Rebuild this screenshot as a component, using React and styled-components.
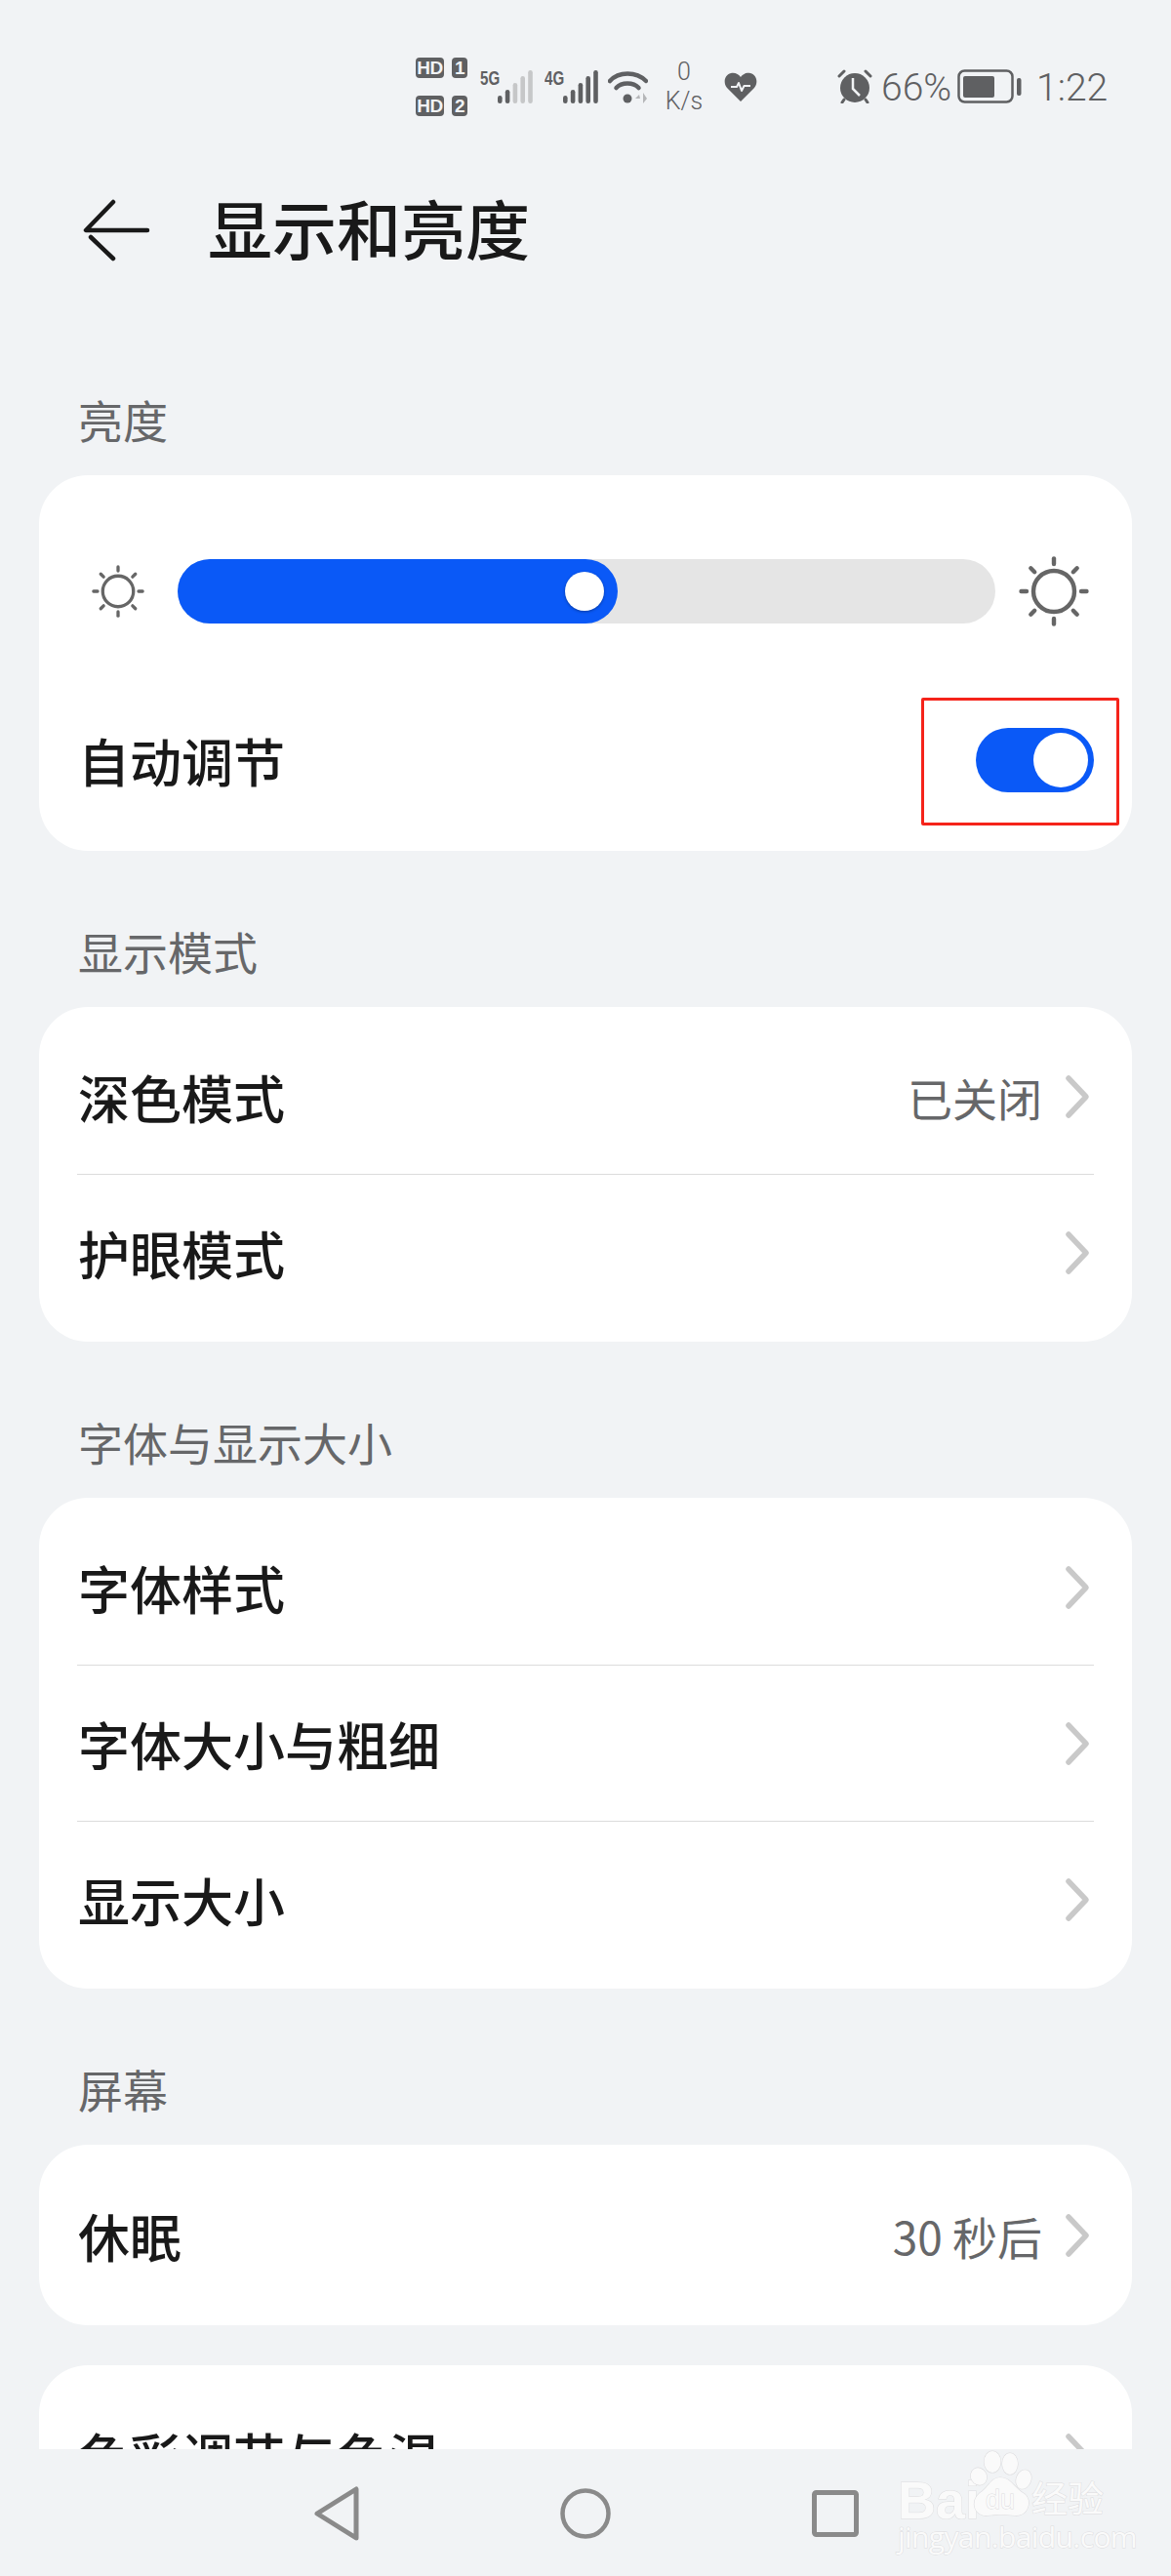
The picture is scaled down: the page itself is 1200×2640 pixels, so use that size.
import React from "react";
import styled, { createGlobalStyle } from "styled-components";

const FONT = `"Noto Sans CJK SC", "Noto Sans", sans-serif`;
const INK = "#5f6062";

const Global = createGlobalStyle`
  html, body { margin: 0; padding: 0; background: #f1f3f5; }
  * { box-sizing: border-box; }
`;

const Page = styled.div`
  width: 1200px;
  height: 2640px;
  display: flex;
  flex-direction: column;
  position: relative;
  overflow: hidden;
  background: #f1f3f5;
  font-family: ${FONT};
`;

const StatusBar = styled.div`
  height: 177px;
  flex: none;
  display: flex;
  align-items: center;
  padding-left: 426px;
  color: ${INK};
  font-family: Roboto, "Noto Sans", sans-serif;
`;
const SimColumn = styled.div`
  width: 53px;
  display: flex;
  flex-direction: column;
  gap: 18px;
`;
const SimRow = styled.div`
  display: flex;
  justify-content: space-between;
`;
const SimBadge = styled.span`
  height: 21px;
  width: ${(p) => p.$w}px;
  background: ${INK};
  color: #f1f3f5;
  border-radius: 4px;
  font: 700 19px/21px "Liberation Sans", sans-serif;
  text-align: center;
  letter-spacing: -0.5px;
`;
const NetLabel = styled.span`
  font: 700 21px/18px "Liberation Sans", sans-serif;
  transform: scaleX(0.72);
  transform-origin: left center;
  width: ${(p) => p.$w}px;
  margin-left: ${(p) => p.$ml}px;
  margin-bottom: 17px;
  white-space: nowrap;
`;
const StatusIcon = styled.svg`
  display: block;
  flex: none;
  margin-left: ${(p) => p.$ml || 0}px;
`;
const Speed = styled.div`
  width: 40px;
  margin-left: 17px;
  display: flex;
  flex-direction: column;
  align-items: center;
  font-weight: 300;
  font-size: 25px;
  line-height: 30px;
`;
const StatusText = styled.span`
  font-size: 39px;
  font-weight: 300;
  line-height: 40px;
  margin-left: ${(p) => p.$ml}px;
  margin-top: 3px;
`;

const Header = styled.header`
  height: 167px;
  flex: none;
  display: flex;
  align-items: flex-start;
  padding: 27px 0 0 85px;
`;
const Title = styled.h1`
  margin: -5px 0 0 58px;
  font-size: 66px;
  font-weight: 500;
  line-height: 66px;
  color: #191919;
`;

const Scroll = styled.main`
  flex: 1;
  min-height: 0;
  overflow: hidden;
  padding: 0 40px;
`;
const SectionLabel = styled.div`
  font-size: 46px;
  line-height: 56px;
  padding-left: 40px;
  height: ${(p) => (p.$first ? 143 : 160)}px;
  padding-top: ${(p) => (p.$first ? 57 : 74)}px;
  color: #666769;
`;
const Card = styled.section`
  background: #fff;
  border-radius: 50px;
  padding: ${(p) => (p.$flat ? 0 : 12)}px 0;
  margin-top: ${(p) => p.$mt || 0}px;
`;
const SliderRow = styled.div`
  display: flex;
  align-items: center;
  padding: 83px 44px 0 54px;
`;
const Track = styled.div`
  flex: 1;
  height: 66px;
  margin: 0 24px 0 34px;
  border-radius: 33px;
  background: #e5e5e5;
`;
const Fill = styled.div`
  height: 100%;
  border-radius: 33px;
  background: #0a59f7;
  display: flex;
  align-items: center;
  justify-content: flex-end;
  padding-right: 14px;
`;
const Thumb = styled.span`
  width: 40px;
  height: 40px;
  border-radius: 50%;
  background: #fff;
  box-shadow: 0 1px 3px rgba(0, 0, 0, 0.35);
`;
const AutoRow = styled.div`
  display: flex;
  align-items: center;
  justify-content: space-between;
  margin-top: 104px;
  padding: 0 39px 60px 40px;
`;
const ToggleWrap = styled.div`
  position: relative;
`;
const Toggle = styled.div`
  width: 121px;
  height: 66px;
  border-radius: 33px;
  background: #0a59f7;
  display: flex;
  align-items: center;
  justify-content: flex-end;
  padding-right: 6px;
`;
const Knob = styled.span`
  width: 56px;
  height: 56px;
  border-radius: 50%;
  background: #fff;
`;
const Highlight = styled.div`
  position: absolute;
  left: -56px;
  top: -31px;
  width: 203px;
  height: 131px;
  border: 3px solid #f5231a;
  border-radius: 2px;
`;
const Row = styled.div`
  min-height: ${(p) => p.$h || 159}px;
  display: flex;
  align-items: center;
  padding: 0 43px 0 40px;
`;
const RowLabel = styled.span`
  font-size: 53px;
  font-weight: 500;
  line-height: 64px;
  color: #191919;
  flex: 1;
  white-space: nowrap;
`;
const RowValue = styled.span`
  font-size: 46px;
  line-height: 56px;
  color: #666769;
  margin-right: 23px;
`;
const Divider = styled.div`
  height: 1px;
  margin: 0 39px;
  background: #dcdcdc;
`;

const NavBar = styled.nav`
  height: 130px;
  flex: none;
  position: relative;
  background: #f1f3f5;
  display: flex;
  align-items: center;
  padding: 2px 0 0 320px;
`;
const NavCircle = styled.svg`
  flex: none;
  margin-left: ${(p) => p.$ml}px;
`;
const Watermark = styled.div`
  position: absolute;
  left: 920px;
  top: 0;
  width: 220px;
  height: 108px;
  color: #fafafa;
  -webkit-text-stroke: 1px #dddddf;
  paint-order: stroke;
`;
const WmBai = styled.span`
  position: absolute;
  left: 0;
  top: 22px;
  font: 700 54px/60px "Liberation Sans", sans-serif;
`;
const WmCn = styled.span`
  position: absolute;
  left: 137px;
  top: 26px;
  font: 400 37px/46px "Noto Sans CJK SC", sans-serif;
  white-space: nowrap;
`;
const WmUrl = styled.span`
  position: absolute;
  left: 0;
  top: 72px;
  font: 400 30px/36px "Open Sans", sans-serif;
  white-space: nowrap;
  letter-spacing: -0.6px;
`;
const WmPaw = styled.svg`
  position: absolute;
  left: 72px;
  top: 1px;
`;

const Sun = ({ size }) => {
  const rays = [0, 45, 90, 135, 180, 225, 270, 315];
  return (
    <svg width={size} height={size} viewBox="0 0 72 72" fill="none" stroke="#666" strokeLinecap="round" style={{ flex: "none" }}>
      <circle cx="36" cy="36" r="21" strokeWidth="4.4" />
      {rays.map((a) => (
        <line key={a} x1="36" y1="2.5" x2="36" y2="8" strokeWidth="4.4" transform={`rotate(${a} 36 36)`} />
      ))}
    </svg>
  );
};

const Chevron = () => (
  <svg width="26" height="46" viewBox="0 0 26 46" fill="none" stroke="#c9c9c9" strokeWidth="5.5" strokeLinecap="round" strokeLinejoin="round" style={{ flex: "none" }}>
    <path d="M4 4 L22 23 L4 42" />
  </svg>
);

const Signal = ({ dim }) => (
  <StatusIcon width="36" height="34" viewBox="0 0 36 34">
    {[8, 14, 21, 28, 34].map((h, i) => (
      <rect key={i} x={i * 7.8} y={34 - h} width="4.6" height={h} rx="2.3" fill={i >= dim ? "#c6c7c8" : INK} />
    ))}
  </StatusIcon>
);

const BackIcon = () => (
  <svg width="70" height="64" viewBox="85 202 70 64" fill="none" stroke="#191919" strokeWidth="4.5" strokeLinecap="round" strokeLinejoin="round" style={{ flex: "none" }}>
    <path d="M116 205 L88 234 H151 M93 241 L116 263" />
  </svg>
);

const SettingRow = ({ label, value, h }) => (
  <Row $h={h}>
    <RowLabel>{label}</RowLabel>
    {value && <RowValue>{value}</RowValue>}
    <Chevron />
  </Row>
);

export default function App() {
  return (
    <Page>
      <Global />
      <StatusBar>
        <SimColumn>
          <SimRow>
            <SimBadge $w={29}>HD</SimBadge>
            <SimBadge $w={16}>1</SimBadge>
          </SimRow>
          <SimRow>
            <SimBadge $w={29}>HD</SimBadge>
            <SimBadge $w={16}>2</SimBadge>
          </SimRow>
        </SimColumn>
        <NetLabel $w={18} $ml={13}>5G</NetLabel>
        <Signal dim={2} />
        <NetLabel $w={19} $ml={12}>4G</NetLabel>
        <Signal dim={5} />
        <StatusIcon $ml={10} width="41" height="36" viewBox="0 0 41 36" fill="none">
          <path d="M2 12 C11 2 29 2 39 12" stroke={INK} strokeWidth="4.5" strokeLinecap="round" />
          <path d="M8.5 19 C14 13 26 13 31.5 19" stroke={INK} strokeWidth="4.5" strokeLinecap="round" />
          <circle cx="20" cy="30" r="4.5" fill={INK} />
          <path d="M33 30 L28 30 L32 26 Z M36 24 L40 30 L36 35 Z" fill="#b5b6b8" />
        </StatusIcon>
        <Speed>
          <span>0</span>
          <span>K/s</span>
        </Speed>
        <StatusIcon $ml={21} width="34" height="30" viewBox="0 0 34 30">
          <path d="M17 30 L3 16 C-1 11 0 3 7 1 C11 0 15 2 17 5 C19 2 23 0 27 1 C34 3 35 11 31 16 Z" fill={INK} />
          <path d="M7 15 H13 L15 11 L18 19 L20.5 14 H27" fill="none" stroke="#f1f3f5" strokeWidth="2" strokeLinejoin="round" />
        </StatusIcon>
        <StatusIcon $ml={82} width="36" height="35" viewBox="0 0 36 35" fill="none">
          <circle cx="18" cy="19" r="15" fill={INK} />
          <path d="M16 9 V20 L23 27" stroke="#f1f3f5" strokeWidth="2.5" />
          <path d="M2 7 L7 2 M34 7 L29 2 M7 31 L5 34 M29 31 L31 34" stroke={INK} strokeWidth="3" strokeLinecap="round" />
        </StatusIcon>
        <StatusText $ml={9}>66%</StatusText>
        <StatusIcon $ml={6} width="66" height="35" viewBox="0 0 66 35" fill="none">
          <rect x="1.5" y="1.5" width="55" height="32" rx="6" stroke={INK} strokeWidth="2.5" />
          <rect x="6" y="7" width="32" height="22" rx="2" fill={INK} />
          <rect x="61" y="9" width="4.5" height="18" rx="2" fill={INK} />
        </StatusIcon>
        <StatusText $ml={15}>1:22</StatusText>
      </StatusBar>

      <Header>
        <BackIcon />
        <Title>显示和亮度</Title>
      </Header>

      <Scroll>
        <SectionLabel $first>亮度</SectionLabel>
        <Card $flat>
          <SliderRow>
            <Sun size={54} />
            <Track>
              <Fill style={{ width: `${(452 / 840) * 100}%` }}>
                <Thumb />
              </Fill>
            </Track>
            <Sun size={72} />
          </SliderRow>
          <AutoRow>
            <RowLabel>自动调节</RowLabel>
            <ToggleWrap>
              <Toggle>
                <Knob />
              </Toggle>
              <Highlight />
            </ToggleWrap>
          </AutoRow>
        </Card>

        <SectionLabel>显示模式</SectionLabel>
        <Card>
          <SettingRow label="深色模式" value="已关闭" />
          <Divider />
          <SettingRow label="护眼模式" />
        </Card>

        <SectionLabel>字体与显示大小</SectionLabel>
        <Card>
          <SettingRow label="字体样式" />
          <Divider />
          <SettingRow label="字体大小与粗细" />
          <Divider />
          <SettingRow label="显示大小" />
        </Card>

        <SectionLabel>屏幕</SectionLabel>
        <Card>
          <SettingRow label="休眠" value="30 秒后" h={161} />
        </Card>

        <Card $mt={41}>
          <SettingRow label="色彩调节与色温" />
        </Card>
      </Scroll>

      <NavBar>
        <svg width="50" height="56" viewBox="0 0 50 56" fill="none" stroke="#8a8a8a" strokeWidth="5" strokeLinejoin="round" style={{ flex: "none" }}>
          <path d="M45 3 V53 L5 28 Z" />
        </svg>
        <NavCircle $ml={204} width="52" height="52" viewBox="0 0 52 52" fill="none" stroke="#8a8a8a" strokeWidth="4.5">
          <circle cx="26" cy="26" r="23.5" />
        </NavCircle>
        <NavCircle $ml={206} width="48" height="48" viewBox="0 0 48 48" fill="none" stroke="#8a8a8a" strokeWidth="5" strokeLinejoin="round">
          <rect x="2.5" y="2.5" width="43" height="43" rx="2" />
        </NavCircle>
        <Watermark>
          <WmBai>Bai</WmBai>
          <WmPaw width="68" height="72" viewBox="0 0 68 72" fill="#fafafa" stroke="#dddddf" strokeWidth="1.2">
            <ellipse cx="25" cy="12" rx="8.5" ry="11" />
            <ellipse cx="43" cy="14" rx="8" ry="11" />
            <ellipse cx="11" cy="27" rx="8" ry="9" transform="rotate(-30 11 27)" />
            <ellipse cx="57" cy="30" rx="7.5" ry="10" transform="rotate(20 57 30)" />
            <path d="M33 28 C44 28 47 39 58 45 C66 51 62 68 48 67 C40 66 28 66 20 67 C6 68 2 52 12 44 C21 39 23 28 33 28 Z" />
            <text x="18" y="60" fontSize="27" fontFamily="Liberation Sans" strokeWidth="1">du</text>
          </WmPaw>
          <WmCn>经验</WmCn>
          <WmUrl>jingyan.baidu.com</WmUrl>
        </Watermark>
      </NavBar>
    </Page>
  );
}
